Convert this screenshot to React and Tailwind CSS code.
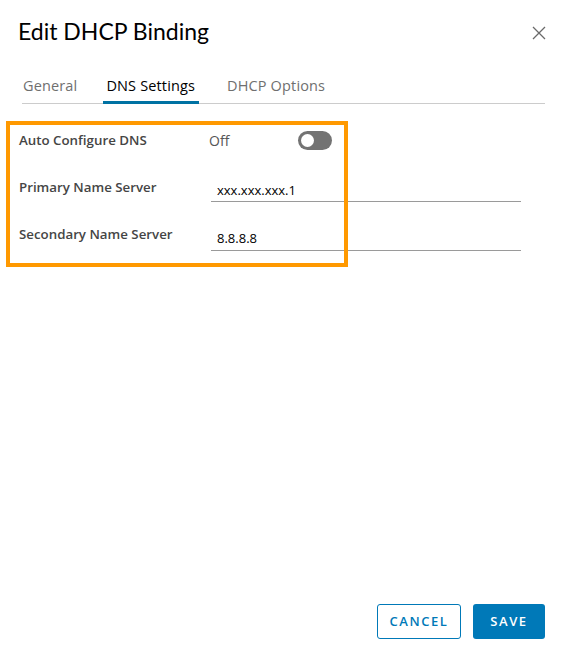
export default function App() {
  return (
    <div className="relative w-[564px] h-[658px] bg-white font-['Open_Sans',sans-serif] text-[#313131]">
      <div className="flex items-start justify-between pl-[18px] pr-[18px] pt-[17px]">
        <h1 className="font-['Lato',sans-serif] text-[23px] leading-[28px] font-normal text-[#000]">Edit DHCP Binding</h1>
        <svg className="mt-[9px]" width="14" height="14" viewBox="0 0 14 14" fill="none" stroke="#6a6a6a" strokeWidth="1.3">
          <path d="M1 1L13 13M13 1L1 13" />
        </svg>
      </div>

      <div className="ml-[22px] mr-[19px] mt-[31px] flex border-b border-[#cccccc] text-[14.5px] leading-[20px] tracking-[0.01em]">
        <div className="pl-[1px] pb-[7px] text-[#6f6f6f]">General</div>
        <div className="ml-[26px] pb-[4px] pl-[3px] pr-[4px] border-b-[3px] border-[#0072a3] -mb-[1px] text-[#000]">DNS Settings</div>
        <div className="ml-[28px] pb-[7px] text-[#6f6f6f]">DHCP Options</div>
      </div>

      <div className="mt-[26px] pl-[19px] text-[13.3px] leading-[18px]">
        <div className="flex items-center h-[20px]">
          <div className="w-[190px] font-semibold text-[#454545]">Auto Configure DNS</div>
          <div className="w-[89px] text-[14px] text-[#565656] pt-[2px]">Off</div>
          <div className="w-[34px] h-[19px] rounded-full bg-[#737373] flex items-center pl-[3px]">
            <div className="w-[13px] h-[13px] rounded-full bg-white" />
          </div>
        </div>
        <div className="flex items-start mt-[26px]">
          <div className="w-[192px] font-semibold text-[#454545] pt-[2px]">Primary Name Server</div>
          <div className="w-[310px] border-b border-[#9a9a9a] pl-[6px] pt-[5px] pb-[2px] text-[13px] leading-[18px] text-[#000]">xxx.xxx.xxx.1</div>
        </div>
        <div className="flex items-start mt-[23px]">
          <div className="w-[192px] font-semibold text-[#454545]">Secondary Name Server</div>
          <div className="w-[310px] border-b border-[#9a9a9a] pl-[6px] pt-[4px] pb-[3px] text-[13px] leading-[18px] text-[#000]">8.8.8.8</div>
        </div>
      </div>

      <div className="absolute left-[6px] top-[121px] w-[342px] h-[146px] border-[4px] border-[#ff9900]" />

      <div className="absolute right-[19px] top-[604px] flex gap-[12px] text-[13px] font-semibold tracking-[0.12em]">
        <button className="w-[84px] h-[35px] rounded-[3px] border border-[#0079b8] text-[#0079b8] bg-white">CANCEL</button>
        <button className="w-[72px] h-[35px] rounded-[3px] bg-[#0079b8] text-white">SAVE</button>
      </div>
    </div>
  );
}
